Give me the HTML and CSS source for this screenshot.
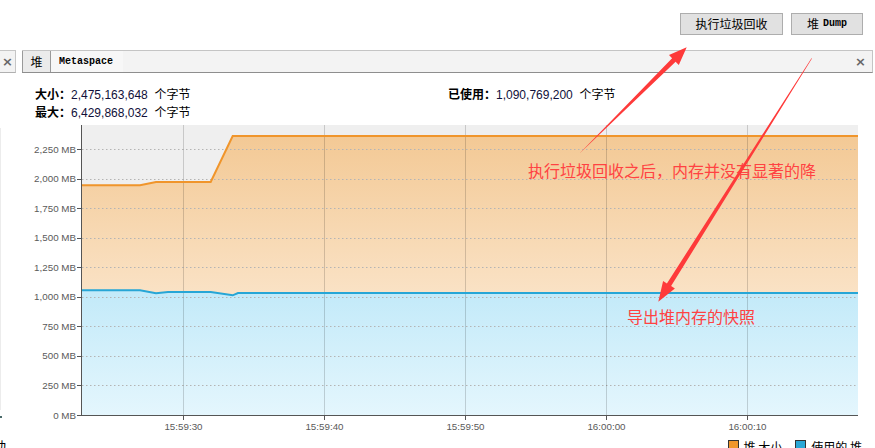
FILE: index.html
```html
<!DOCTYPE html>
<html>
<head>
<meta charset="utf-8">
<link rel="stylesheet" href="styles.css">
</head>
<body>
<div class="page">
  <div class="toolbar">
    <button class="btn btn-gc">执行垃圾回收</button>
    <button class="btn btn-dump">堆 <span class="mono">Dump</span></button>
  </div>

  <div class="tabrow">
    <div class="sidebox"><span class="close">×</span></div>
    <div class="tabstrip">
      <div class="tab tab-active">堆</div>
      <div class="tab tab-meta"><span class="mono">Metaspace</span></div>
      <div class="strip-fill"></div>
      <span class="close close-right">×</span>
    </div>
  </div>

  <div class="info">
    <div class="info-col">
      <div class="info-line"><b>大小：</b><span class="num">2,475,163,648</span> 个字节</div>
      <div class="info-line"><b>最大：</b><span class="num">6,429,868,032</span> 个字节</div>
    </div>
    <div class="info-col">
      <div class="info-line"><b>已使用：</b><span class="num">1,090,769,200</span> 个字节</div>
    </div>
  </div>

  <div class="chart">
    <svg class="chart-svg" width="875" height="317" viewBox="0 121 875 317">
      <defs>
        <linearGradient id="gOrange" x1="0" y1="136" x2="0" y2="293" gradientUnits="userSpaceOnUse">
          <stop offset="0" stop-color="#f3c995"/>
          <stop offset="1" stop-color="#fae2c5"/>
        </linearGradient>
        <linearGradient id="gBlue" x1="0" y1="293" x2="0" y2="415" gradientUnits="userSpaceOnUse">
          <stop offset="0" stop-color="#c3eaf9"/>
          <stop offset="1" stop-color="#e4f6fd"/>
        </linearGradient>
      </defs>
      <rect x="82" y="125" width="776" height="290" fill="#efefef"/>
      <polygon fill="url(#gOrange)" points="82,185.3 140,185.3 156,182 210.7,182 232.7,136 858,136 858,415 82,415"/>
      <polygon fill="url(#gBlue)" points="82,290.3 140,290.3 156,293.3 168,292 210.7,292 232.7,295.3 238,293 858,293 858,415 82,415"/>
      <g stroke="#b4b4b4" stroke-width="1" stroke-dasharray="1.5 2.5">
        <line x1="82" x2="858" y1="149.5" y2="149.5"/>
        <line x1="82" x2="858" y1="179.5" y2="179.5"/>
        <line x1="82" x2="858" y1="208.5" y2="208.5"/>
        <line x1="82" x2="858" y1="238.5" y2="238.5"/>
        <line x1="82" x2="858" y1="267.5" y2="267.5"/>
        <line x1="82" x2="858" y1="297.5" y2="297.5"/>
        <line x1="82" x2="858" y1="326.5" y2="326.5"/>
        <line x1="82" x2="858" y1="356.5" y2="356.5"/>
        <line x1="82" x2="858" y1="385.5" y2="385.5"/>
      </g>
      <g stroke="rgba(0,0,0,0.16)" stroke-width="1">
        <line x1="183.5" x2="183.5" y1="125" y2="415"/>
        <line x1="324.5" x2="324.5" y1="125" y2="415"/>
        <line x1="465.5" x2="465.5" y1="125" y2="415"/>
        <line x1="606.5" x2="606.5" y1="125" y2="415"/>
        <line x1="747.5" x2="747.5" y1="125" y2="415"/>
      </g>
      <polyline fill="none" stroke="#f0952b" stroke-width="2" points="82,185.3 140,185.3 156,182 210.7,182 232.7,136 858,136"/>
      <polyline fill="none" stroke="#27a6d6" stroke-width="2" points="82,290.3 140,290.3 156,293.3 168,292 210.7,292 232.7,295.3 238,293 858,293"/>
      <g stroke="#555" stroke-width="1">
        <line x1="81.5" x2="81.5" y1="125" y2="416"/>
        <line x1="81" x2="858" y1="415.5" y2="415.5"/>
        <line x1="77" x2="81" y1="149.5" y2="149.5"/>
        <line x1="77" x2="81" y1="179.5" y2="179.5"/>
        <line x1="77" x2="81" y1="208.5" y2="208.5"/>
        <line x1="77" x2="81" y1="238.5" y2="238.5"/>
        <line x1="77" x2="81" y1="267.5" y2="267.5"/>
        <line x1="77" x2="81" y1="297.5" y2="297.5"/>
        <line x1="77" x2="81" y1="326.5" y2="326.5"/>
        <line x1="77" x2="81" y1="356.5" y2="356.5"/>
        <line x1="77" x2="81" y1="385.5" y2="385.5"/>
        <line x1="77" x2="81" y1="415.5" y2="415.5"/>
        <line x1="183.5" x2="183.5" y1="415" y2="420"/>
        <line x1="324.5" x2="324.5" y1="415" y2="420"/>
        <line x1="465.5" x2="465.5" y1="415" y2="420"/>
        <line x1="606.5" x2="606.5" y1="415" y2="420"/>
        <line x1="747.5" x2="747.5" y1="415" y2="420"/>
      </g>
      <g class="axis-text" text-anchor="end">
        <text x="76" y="153">2,250 MB</text>
        <text x="76" y="182">2,000 MB</text>
        <text x="76" y="212">1,750 MB</text>
        <text x="76" y="241">1,500 MB</text>
        <text x="76" y="271">1,250 MB</text>
        <text x="76" y="300">1,000 MB</text>
        <text x="76" y="330">750 MB</text>
        <text x="76" y="359">500 MB</text>
        <text x="76" y="389">250 MB</text>
        <text x="76" y="419">0 MB</text>
      </g>
      <g class="axis-text" text-anchor="middle">
        <text x="183.5" y="429.5">15:59:30</text>
        <text x="324.5" y="429.5">15:59:40</text>
        <text x="465.5" y="429.5">15:59:50</text>
        <text x="606.5" y="429.5">16:00:00</text>
        <text x="747.5" y="429.5">16:00:10</text>
      </g>
      <line x1="0.5" x2="0.5" y1="128" y2="410" stroke="#ececec"/>
      <rect x="0" y="416" width="2" height="2" fill="#4a6a6a"/>
    </svg>
  </div>

  <div class="legend">
    <span class="cut">动</span>
    <div class="legend-items">
      <span class="swatch swatch-orange"></span><span class="legend-label">堆 大小</span>
      <span class="swatch swatch-blue"></span><span class="legend-label">使用的 堆</span>
    </div>
  </div>

  <div class="overlay">
    <div class="note note-gc">执行垃圾回收之后，内存并没有显著的降</div>
    <div class="note note-dump">导出堆内存的快照</div>
    <svg class="arrows" width="875" height="448" viewBox="0 0 875 448">
      <polygon fill="#fe3a3a" points="580.7,152.3 672.1,58.2 669,55 686.7,47.3 678.8,65 675.6,61.8 579.3,153.7"/>
      <polygon fill="#fe3a3a" points="811.95,58.45 671.1,286.1 674.9,288.5 658.3,301.7 663.1,281.1 666.9,283.5 811.45,58.15"/>
    </svg>
  </div>
</div>
</body>
</html>
```

FILE: styles.css
```css
html, body {
  margin: 0;
  padding: 0;
  background: #ffffff;
}

body {
  font-family: "Noto Sans CJK SC", "Liberation Sans", sans-serif;
  font-size: 12px;
  color: #000;
  width: 875px;
  height: 448px;
  overflow: hidden;
}

.page {
  position: relative;
  width: 875px;
  height: 448px;
  overflow: hidden;
}

.mono {
  font-family: "Liberation Mono", "DejaVu Sans Mono", monospace;
  font-weight: bold;
  font-size: 10px;
}

/* toolbar */
.toolbar {
  height: 50px;
  box-sizing: border-box;
  padding: 13px 12px 0 0;
  display: flex;
  justify-content: flex-end;
  align-items: flex-start;
  gap: 8px;
}

.btn {
  height: 22px;
  margin: 0;
  padding: 0;
  box-sizing: border-box;
  border: 1px solid #adadad;
  background: #e1e1e1;
  font-family: "Noto Sans CJK SC", sans-serif;
  font-size: 12px;
  line-height: 20px;
  color: #000;
  display: flex;
  align-items: center;
  justify-content: center;
  gap: 4px;
}

.btn-gc {
  width: 103px;
}

.btn-dump {
  width: 72px;
}

/* tabs */
.tabrow {
  height: 23px;
  display: flex;
  gap: 6px;
}

.sidebox {
  width: 16px;
  box-sizing: border-box;
  border-top: 1px solid #c6c6c6;
  border-right: 1px solid #c6c6c6;
  border-bottom: 1px solid #b0b0b0;
  background: #f3f3f3;
  display: flex;
  align-items: center;
  justify-content: center;
}

.close {
  font-family: "DejaVu Sans", sans-serif;
  font-size: 13px;
  font-weight: bold;
  color: #666;
  line-height: 1;
}

.tabstrip {
  flex: 1;
  margin-right: 2px;
  box-sizing: border-box;
  border-top: 1px solid #c4c4c4;
  border-bottom: 1px solid #8e8e8e;
  border-right: 1px solid #c4c4c4;
  background: #f3f3f3;
  display: flex;
  align-items: stretch;
}

.tab {
  display: flex;
  align-items: center;
  box-sizing: border-box;
}

.tab-active {
  width: 29px;
  justify-content: center;
  border-left: 1px solid #9a9a9a;
  border-right: 1px solid #9a9a9a;
  background: #ebebeb;
  font-size: 12px;
}

.tab-meta {
  padding-left: 8px;
  padding-right: 10px;
  background: #f7f7f7;
}

.strip-fill {
  flex: 1;
}

.close-right {
  align-self: center;
  margin-right: 6px;
}

/* info */
.info {
  box-sizing: border-box;
  height: 48px;
  padding: 12px 0 0 35px;
  display: grid;
  grid-template-columns: 413px auto;
}

.info-line {
  height: 18px;
  line-height: 18px;
  white-space: nowrap;
  font-size: 12px;
}

.info-line b {
  font-weight: bold;
}

.num {
  font-family: "Liberation Sans", sans-serif;
  font-size: 12px;
  color: #10103a;
  margin-right: 4px;
}

/* chart */
.chart {
  height: 317px;
}

.chart-svg {
  display: block;
}

.axis-text {
  font-family: "Liberation Sans", sans-serif;
  font-size: 9.8px;
  fill: #5a5a5a;
}

/* legend */
.legend {
  height: 12px;
  display: flex;
  justify-content: space-between;
  align-items: flex-start;
  overflow: visible;
}

.cut {
  margin-left: -7px;
  margin-top: 1px;
  font-size: 13px;
  line-height: 13px;
}

.legend-items {
  display: flex;
  align-items: flex-start;
  margin-right: 13px;
  padding-top: 2px;
}

.swatch {
  width: 9px;
  height: 9px;
  border: 1px solid #333;
  margin-right: 5px;
}

.swatch-orange {
  background: #f0962c;
}

.swatch-blue {
  background: #2aa7d6;
  margin-left: 13px;
}

.legend-label {
  font-size: 12px;
  line-height: 12px;
  margin-top: 1px;
}

/* annotations */
.overlay {
  position: absolute;
  left: 0;
  top: 0;
  width: 875px;
  height: 448px;
  pointer-events: none;
}

.note {
  position: absolute;
  color: #ff4242;
  font-family: "Noto Sans CJK SC", sans-serif;
  font-size: 16px;
  line-height: 18px;
  white-space: nowrap;
}

.note-gc {
  left: 528px;
  top: 161px;
}

.note-dump {
  left: 627px;
  top: 307px;
}

.arrows {
  position: absolute;
  left: 0;
  top: 0;
}
```
